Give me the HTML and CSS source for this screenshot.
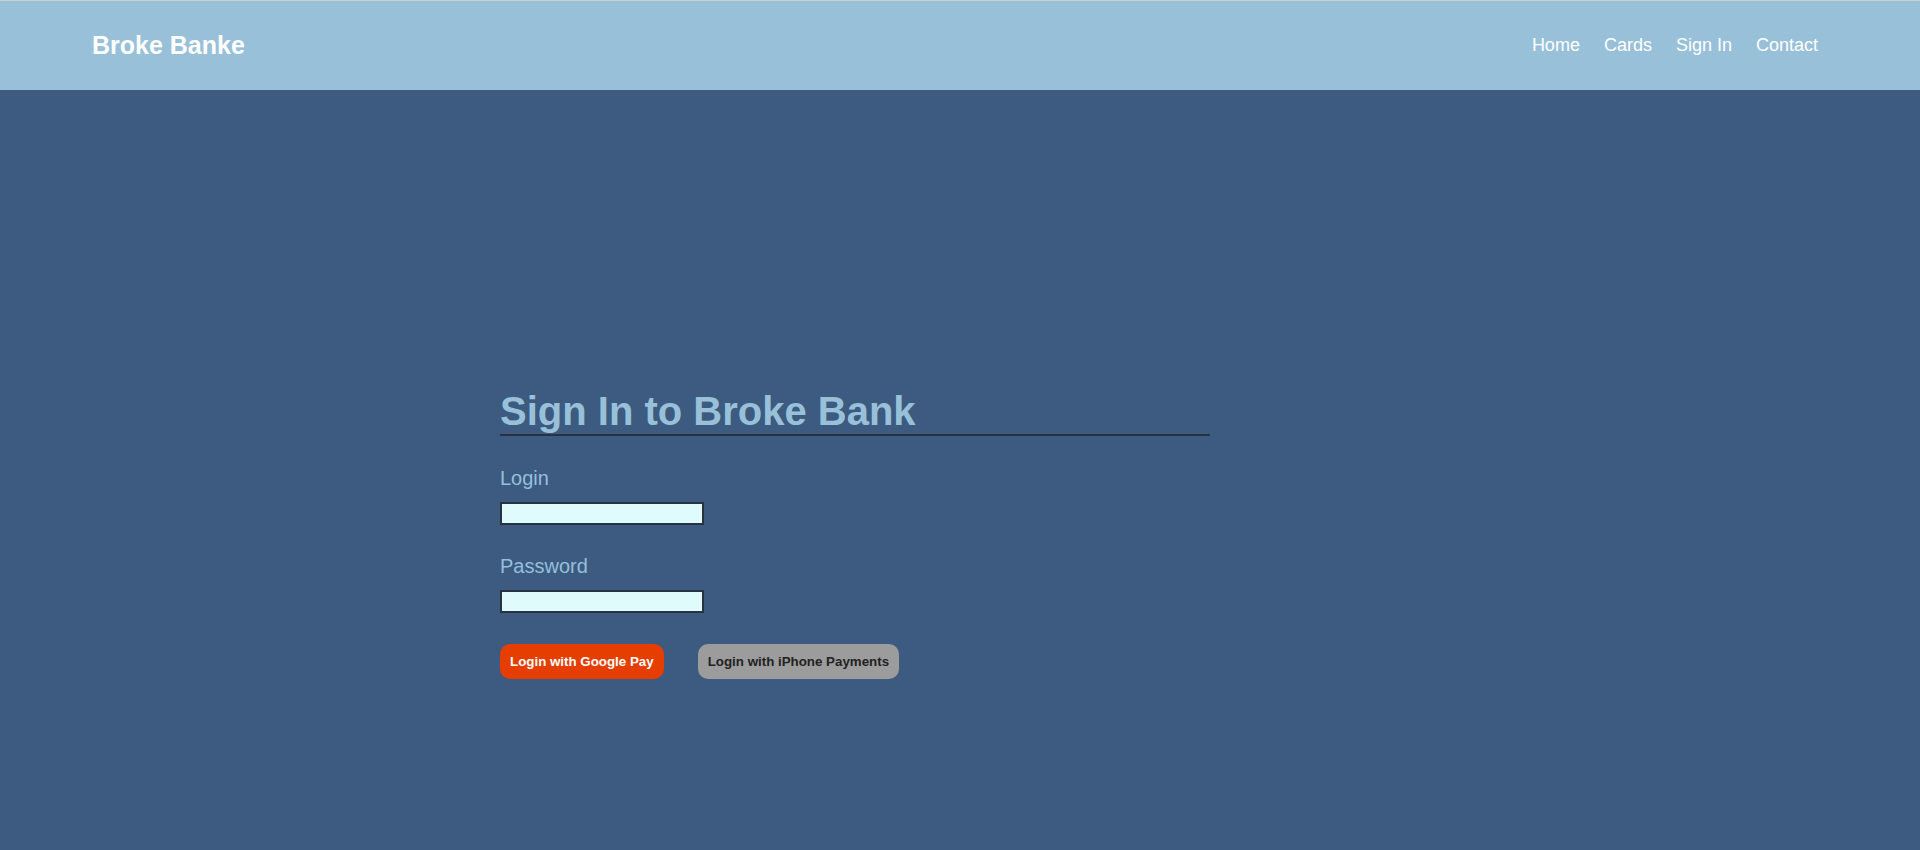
FILE: index.html
```html
<!DOCTYPE html>
<html lang="en">
<head>
<meta charset="utf-8">
<title>Broke Banke - Sign In</title>
<link rel="stylesheet" href="styles.css">
</head>
<body>
  <header class="site-header">
    <div class="logo">Broke Banke</div>
    <nav class="nav">
      <a href="#" class="nav-link">Home</a>
      <a href="#" class="nav-link">Cards</a>
      <a href="#" class="nav-link">Sign In</a>
      <a href="#" class="nav-link">Contact</a>
    </nav>
  </header>
  <main class="main">
    <section class="signin">
      <h1 class="signin-title">Sign In to Broke Bank</h1>
      <form class="signin-form">
        <label class="field-label" for="login">Login</label>
        <input class="field-input" id="login" type="text">
        <label class="field-label" for="password">Password</label>
        <input class="field-input" id="password" type="password">
        <div class="btn-row">
          <button type="button" class="btn btn-google">Login with Google Pay</button>
          <button type="button" class="btn btn-iphone">Login with iPhone Payments</button>
        </div>
      </form>
    </section>
  </main>
</body>
</html>
```
FILE: styles.css
```css
html, body {
  margin: 0;
  padding: 0;
}

body {
  background: #3d5a80;
  font-family: "Liberation Sans", Arial, sans-serif;
  min-height: 850px;
}

.site-header {
  box-sizing: border-box;
  height: 90px;
  border-top: 1px solid #cfcfcf;
  background: #98c1d9;
  display: flex;
  align-items: center;
  justify-content: space-between;
  padding: 0 102px 0 92px;
}

.logo {
  color: #ffffff;
  font-weight: bold;
  font-size: 25px;
}

.nav {
  display: flex;
  gap: 24px;
}

.nav-link {
  color: #ffffff;
  text-decoration: none;
  font-size: 18px;
}

.main {
  padding: 298px 0 0 500px;
}

.signin {
  display: flex;
  flex-direction: column;
  align-items: flex-start;
}

.signin-title {
  margin: 0 0 31px 0;
  width: 710px;
  font-size: 40px;
  line-height: 46px;
  font-weight: bold;
  color: #98c1d9;
  border-bottom: 2px solid #293241;
}

.signin-form {
  display: flex;
  flex-direction: column;
  align-items: flex-start;
}

.field-label {
  color: #94c0dc;
  font-size: 20px;
  line-height: 23px;
  margin-bottom: 12px;
}

.field-input {
  box-sizing: border-box;
  width: 204px;
  height: 23px;
  margin: 0 0 30px 0;
  padding: 1px 2px;
  border: 2px solid #293241;
  background: #e0fbfc;
}

.btn-row {
  display: flex;
  gap: 34px;
  margin-top: 1px;
}

.btn {
  font-family: "Liberation Sans", Arial, sans-serif;
  font-size: 13.333px;
  line-height: 15px;
  font-weight: bold;
  padding: 10px;
  border: none;
  border-radius: 10px;
}

.btn-google {
  background: #e63d00;
  color: #ffffff;
}

.btn-iphone {
  background: #9c9c9c;
  color: #222222;
}
```
